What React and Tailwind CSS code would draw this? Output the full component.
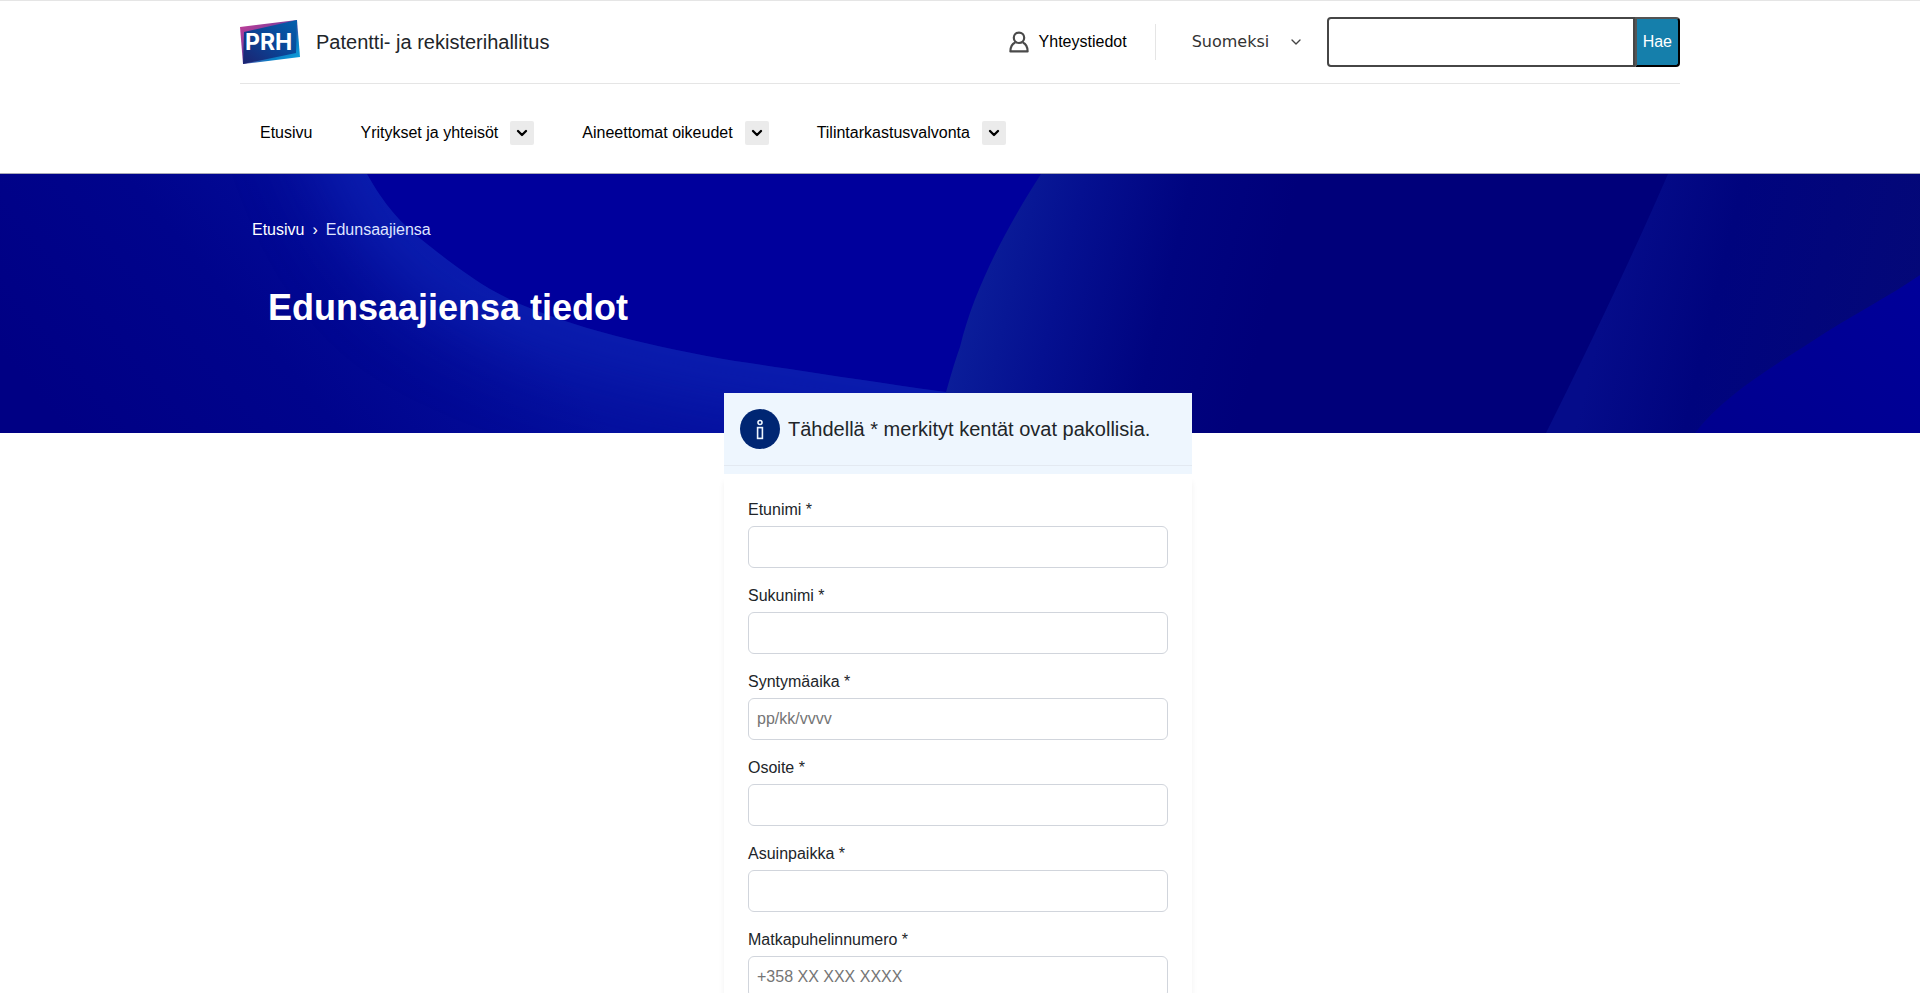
import { ChevronDown } from 'lucide-react';

const NAV_ITEMS = [
  { label: 'Etusivu', hasMenu: false },
  { label: 'Yritykset ja yhteisöt', hasMenu: true },
  { label: 'Aineettomat oikeudet', hasMenu: true },
  { label: 'Tilintarkastusvalvonta', hasMenu: true },
];

const FIELDS = [
  { id: 'etunimi', label: 'Etunimi *' },
  { id: 'sukunimi', label: 'Sukunimi *' },
  { id: 'syntymaaika', label: 'Syntymäaika *', placeholder: 'pp/kk/vvvv' },
  { id: 'osoite', label: 'Osoite *' },
  { id: 'asuinpaikka', label: 'Asuinpaikka *' },
  {
    id: 'matkapuhelin',
    label: 'Matkapuhelinnumero *',
    type: 'tel',
    placeholder: '+358 XX XXX XXXX',
  },
];

function Logo() {
  return (
    <svg width="60" height="46" viewBox="0 0 60 46" aria-hidden="true">
      <defs>
        <linearGradient id="logo-edge" x1="0" y1="0" x2="1" y2="1">
          <stop offset="0" stopColor="#c83c96" />
          <stop offset="0.45" stopColor="#7a3f9c" />
          <stop offset="0.7" stopColor="#0a7cc4" />
          <stop offset="1" stopColor="#10a8e0" />
        </linearGradient>
        <linearGradient id="logo-face" x1="0" y1="1" x2="1" y2="0">
          <stop offset="0" stopColor="#1c2370" />
          <stop offset="0.5" stopColor="#0a4496" />
          <stop offset="1" stopColor="#0560ac" />
        </linearGradient>
      </defs>
      <path d="M0 8 L57 1 L60 38 L3 45 Z" fill="url(#logo-edge)" />
      <path d="M4 13 L57 1 L56 34 L3 45 Z" fill="url(#logo-face)" />
      <text
        x="5"
        y="31"
        fill="#fff"
        fontFamily="Inter, 'Liberation Sans', sans-serif"
        fontSize="23"
        fontWeight="700"
      >
        PRH
      </text>
    </svg>
  );
}

function UserIcon() {
  return (
    <svg
      width="20"
      height="22"
      viewBox="0 0 20 22"
      fill="none"
      stroke="#4a4a4a"
      strokeWidth="2.2"
      strokeLinejoin="round"
      aria-hidden="true"
    >
      <circle cx="10" cy="6.8" r="5.2" />
      <path d="M6.2 11.4 C3 12.8 1.4 15.6 1.4 20.4 H18.6 C18.6 15.6 17 12.8 13.8 11.4" />
    </svg>
  );
}

function InfoIcon() {
  return (
    <svg
      width="40"
      height="40"
      viewBox="0 0 40 40"
      className="shrink-0"
      aria-hidden="true"
    >
      <circle cx="20" cy="20" r="20" fill="#002673" />
      <g fill="none" stroke="#eef6fe" strokeWidth="1.6">
        <circle cx="20" cy="13.5" r="2" />
        <rect x="17.6" y="18.6" width="4.8" height="10.8" />
      </g>
    </svg>
  );
}

function HeroArt() {
  return (
    <svg
      className="absolute inset-0 h-full w-full"
      viewBox="0 0 1920 259"
      preserveAspectRatio="none"
      aria-hidden="true"
    >
      <defs>
        <linearGradient
          id="wave-left"
          gradientUnits="userSpaceOnUse"
          x1="60"
          y1="250"
          x2="380"
          y2="-20"
        >
          <stop offset="0" stopColor="#000084" />
          <stop offset="0.5" stopColor="#00048c" />
          <stop offset="1" stopColor="#040f9e" />
        </linearGradient>
        <linearGradient
          id="wave-middle"
          gradientUnits="userSpaceOnUse"
          x1="970"
          y1="100"
          x2="1260"
          y2="170"
        >
          <stop offset="0" stopColor="#0b1e9a" />
          <stop offset="0.3" stopColor="#051090" />
          <stop offset="0.65" stopColor="#000480" />
          <stop offset="1" stopColor="#00007a" />
        </linearGradient>
        <linearGradient
          id="wave-right"
          gradientUnits="userSpaceOnUse"
          x1="1605"
          y1="130"
          x2="1900"
          y2="200"
        >
          <stop offset="0" stopColor="#050c8a" />
          <stop offset="0.35" stopColor="#00047e" />
          <stop offset="1" stopColor="#040878" />
        </linearGradient>
        <linearGradient id="wave-corner" x1="0" y1="1" x2="1" y2="0">
          <stop offset="0" stopColor="#00008e" />
          <stop offset="1" stopColor="#00009a" />
        </linearGradient>
        <clipPath id="clip-left">
          <path d="M0 0 H367 C385 32 400 48 422 66 C445 84 462 98 490 115 C551 150 649 172 735 187 C810 198 900 212 946 218 V259 H0 Z" />
        </clipPath>
        <filter
          id="soft"
          filterUnits="userSpaceOnUse"
          x="0"
          y="-260"
          width="1300"
          height="700"
          colorInterpolationFilters="sRGB"
        >
          <feGaussianBlur stdDeviation="38" />
        </filter>
      </defs>
      <rect width="1920" height="259" fill="#00009c" />
      <g clipPath="url(#clip-left)">
        <rect width="960" height="259" fill="url(#wave-left)" />
        <path
          d="M330 -140 C370 50 440 92 490 113 C551 146 649 168 735 183 C810 195 900 208 1060 230"
          fill="none"
          stroke="#0c20b2"
          strokeWidth="80"
          filter="url(#soft)"
        />
      </g>
      <path
        d="M1041 0 C1012 45 975 110 960 173 C954 190 948 210 935 259 H1610 V0 Z"
        fill="url(#wave-middle)"
      />
      <path d="M1600 0 H1670 L1550 259 H1600 Z" fill="#00007a" />
      <path d="M1668 0 Q1618 115 1546 259 H1920 V0 Z" fill="url(#wave-right)" />
      <path
        d="M1920 101 C1890 122 1850 142 1811 168 C1762 199 1722 224 1695 259 H1920 Z"
        fill="url(#wave-corner)"
      />
    </svg>
  );
}

function TopBar() {
  return (
    <div className="flex h-[83px] items-center justify-between border-b border-[#e5e5e5]">
      <a href="#" className="flex items-center gap-4 text-xl text-[#212529]">
        <Logo />
        Patentti- ja rekisterihallitus
      </a>

      <div className="flex items-center">
        <a href="#" className="flex items-center gap-2.5 pr-7">
          <UserIcon />
          Yhteystiedot
        </a>
        <div className="h-9 w-px bg-[#e5e5e5]" />
        <div className="relative ml-9 mr-[23px]">
          <select
            aria-label="Kieli"
            className="w-28 appearance-none bg-transparent font-['DejaVu_Sans',sans-serif] text-[#333]"
          >
            <option>Suomeksi</option>
          </select>
          <ChevronDown
            size={16}
            strokeWidth={2}
            className="pointer-events-none absolute right-0 top-1 text-[#444]"
          />
        </div>
        <form className="flex h-[50px]" role="search">
          <input
            type="search"
            aria-label="Haku"
            className="w-[308px] rounded-l border-2 border-[#464646] px-2"
          />
          <button
            type="button"
            className="rounded-r border-2 border-black bg-[#157fab] px-1.5 text-white [border-style:outset]"
          >
            Hae
          </button>
        </form>
      </div>
    </div>
  );
}

function MainNav() {
  return (
    <nav className="flex h-[89px] items-center gap-12 px-5 pt-2">
      {NAV_ITEMS.map(item => (
        <div key={item.label} className="flex items-center gap-3">
          <a href="#">{item.label}</a>
          {item.hasMenu && (
            <button
              type="button"
              aria-label={`Avaa valikko: ${item.label}`}
              className="flex size-6 items-center justify-center rounded-xs bg-[#ebebeb]"
            >
              <ChevronDown size={16} strokeWidth={3.5} />
            </button>
          )}
        </div>
      ))}
    </nav>
  );
}

function Field({ id, label, type = 'text', placeholder }) {
  return (
    <div className="flex flex-col gap-1">
      <label htmlFor={id}>{label}</label>
      <input
        id={id}
        type={type}
        placeholder={placeholder}
        className="h-[42px] rounded-md border border-gray-300 bg-white px-2 placeholder:text-[#757575]"
      />
    </div>
  );
}

function App() {
  return (
    <div className="h-screen overflow-hidden bg-white font-['Liberation_Sans',Arial,sans-serif] text-base text-black">
      <header className="border-b border-t border-b-[#a9a9b8] border-t-[#e5e5e5]">
        <div className="mx-auto max-w-[1440px]">
          <TopBar />
          <MainNav />
        </div>
      </header>

      <section className="relative bg-[#00009c] text-white">
        <HeroArt />
        <div className="relative mx-auto h-[259px] max-w-[1440px] px-3 pt-11">
          <nav aria-label="Murupolku" className="flex gap-2">
            <a href="#">Etusivu</a>
            <span>›</span>
            <span className="text-[#dfe4ff]">Edunsaajiensa</span>
          </nav>
          <h1 className="px-4 pt-11 text-4xl leading-[44px] font-bold">
            Edunsaajiensa tiedot
          </h1>
        </div>
      </section>

      <main className="relative -mt-10 flex justify-center pr-1 text-[#212529]">
        <div className="w-full max-w-[468px]">
          <div className="bg-[#eef6fe] pb-2">
            <div className="flex items-center gap-2 border-b border-[#e3e9f1] p-4 text-xl">
              <InfoIcon />
              <p>Tähdellä * merkityt kentät ovat pakollisia.</p>
            </div>
          </div>
          <form className="flex flex-col gap-4 bg-white p-6 shadow-[0_8px_6px_rgba(0,0,0,0.06)]">
            {FIELDS.map(field => (
              <Field key={field.id} {...field} />
            ))}
          </form>
        </div>
      </main>
    </div>
  );
}

export default App;
